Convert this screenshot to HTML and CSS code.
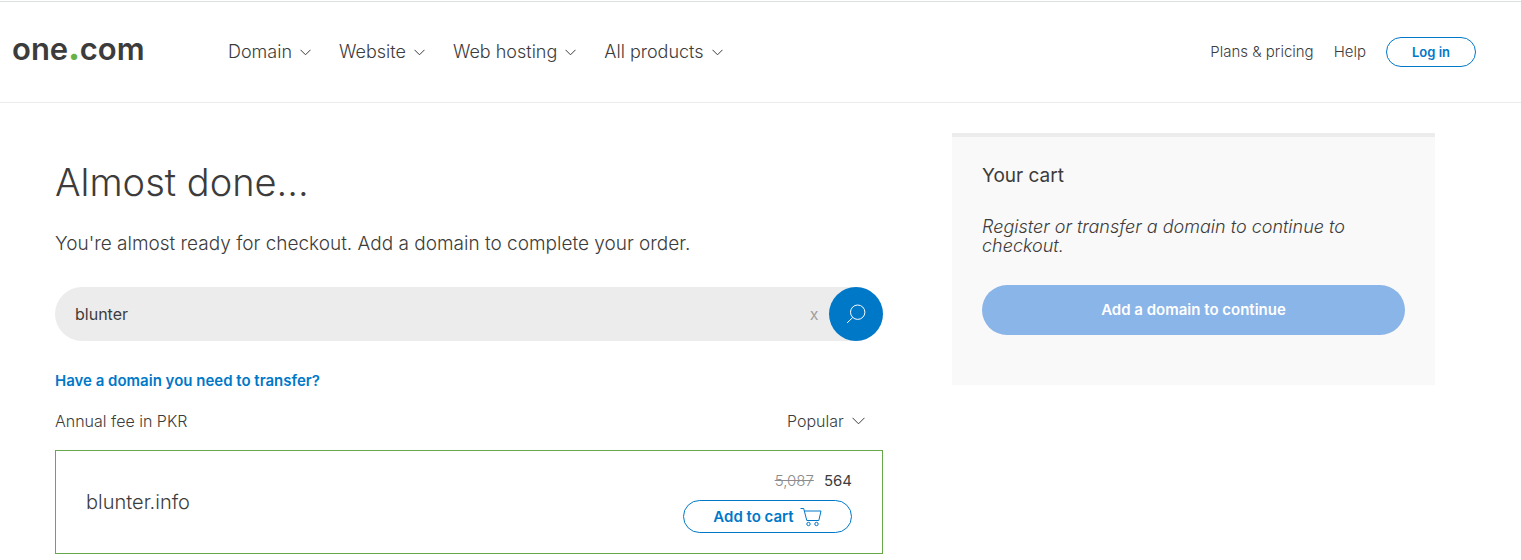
FILE: index.html
```html
<!DOCTYPE html>
<html lang="en">
<head>
<meta charset="utf-8">
<meta name="viewport" content="width=device-width, initial-scale=1">
<title>Almost done... | one.com</title>
<link rel="stylesheet" href="styles.css">
</head>
<body>
<header class="header">
  <a class="logo" href="#">one<span class="logo-dot">.</span>com</a>
  <nav class="nav" aria-label="Main">
    <button class="nav-item" type="button">Domain <svg class="chevron" viewBox="0 0 11 7" aria-hidden="true"><path d="M.5.8l5 5 5-5"/></svg></button>
    <button class="nav-item" type="button">Website <svg class="chevron" viewBox="0 0 11 7" aria-hidden="true"><path d="M.5.8l5 5 5-5"/></svg></button>
    <button class="nav-item" type="button">Web hosting <svg class="chevron" viewBox="0 0 11 7" aria-hidden="true"><path d="M.5.8l5 5 5-5"/></svg></button>
    <button class="nav-item" type="button">All products <svg class="chevron" viewBox="0 0 11 7" aria-hidden="true"><path d="M.5.8l5 5 5-5"/></svg></button>
  </nav>
  <div class="account">
    <a class="account-link" href="#">Plans &amp; pricing</a>
    <a class="account-link" href="#">Help</a>
    <a class="login" href="#">Log in</a>
  </div>
</header>
<main class="main">
  <section class="order">
    <h1 class="title">Almost done...</h1>
    <p class="intro">You're almost ready for checkout. Add a domain to complete your order.</p>
    <form class="search" role="search">
      <input class="search-input" type="text" value="blunter" aria-label="Domain name">
      <button class="search-clear" type="button" aria-label="Clear">x</button>
      <button class="search-submit" type="submit" aria-label="Search">
        <svg class="search-icon" viewBox="0 0 20 20" aria-hidden="true"><circle cx="11.7" cy="8.2" r="7.2"/><path d="M6.7 13.5L1 19"/></svg>
      </button>
    </form>
    <a class="transfer" href="#">Have a domain you need to transfer?</a>
    <div class="list-head">
      <span>Annual fee in PKR</span>
      <div class="sort">
        <select class="sort-select" aria-label="Sort domains"><option>Popular</option></select>
        <svg class="sort-chevron" viewBox="0 0 13 8" aria-hidden="true"><path d="M.5.8l6 6 6-6"/></svg>
      </div>
    </div>
    <article class="offer">
      <h2 class="offer-name">blunter.info</h2>
      <div class="offer-buy">
        <div class="prices"><s class="price-old">5,087</s><span class="price">564</span></div>
        <button class="add" type="button">Add to cart
          <svg class="cart-icon" viewBox="0 0 22 20" aria-hidden="true"><path d="M.5 1.5h3.200L6.800 13.500h12L21 4H4.400"/><circle cx="8.500" cy="17" r="1.700"/><circle cx="16.500" cy="17" r="1.700"/></svg>
        </button>
      </div>
    </article>
  </section>
  <aside class="cart">
    <h2 class="cart-title">Your cart</h2>
    <p class="cart-note">Register or transfer a domain to continue to checkout.</p>
    <button class="cart-button" type="button" disabled>Add a domain to continue</button>
  </aside>
</main>
</body>
</html>
```

FILE: styles.css
```css
* { box-sizing: border-box; }
body {
  margin: 0;
  padding-top: 1px;
  background: #fff;
  color: #3c3c3c;
  font-family: Inter, "Open Sans", sans-serif;
  font-size: 15px;
  font-weight: 300;
  line-height: 20px;
}
button, input, select { font: inherit; color: inherit; }
button { cursor: pointer; }
a { text-decoration: none; color: inherit; }
h1, h2, p { margin: 0; font-weight: 300; }
svg { fill: none; stroke: currentColor; flex: none; }

.header {
  display: flex;
  align-items: center;
  height: 102px;
  padding: 0 45px 0 12px;
  border-top: 1px solid #dcdfdf;
  border-bottom: 1px solid #ebebeb;
}
.logo {
  width: 216px;
  font-size: 31px;
  font-weight: 600;
  line-height: 40px;
  padding-bottom: 6px;
}
.logo-dot { color: #66b245; font-weight: 900; }
.nav { display: flex; gap: 28px; }
.nav-item {
  display: flex;
  align-items: center;
  gap: 8px;
  padding: 0;
  border: 0;
  background: none;
  font-size: 18px;
}
.chevron { width: 11px; height: 7px; }
.account {
  display: flex;
  align-items: center;
  gap: 20px;
  margin-left: auto;
}
.login {
  width: 90px;
  padding: 4px 0;
  border: 1px solid #0078c8;
  border-radius: 15px;
  color: #0078c8;
  font-size: 13px;
  font-weight: 600;
  text-align: center;
}

.main {
  display: grid;
  grid-template-columns: 60% 35%;
  justify-content: space-between;
  align-items: start;
  padding: 30px 86px 0 55px;
}
.order { padding-top: 25px; }
.title { font-size: 38px; line-height: 48px; }
.intro { margin-top: 26px; font-size: 19px; line-height: 24px; }
.search {
  display: flex;
  margin-top: 31px;
  height: 54px;
  border-radius: 27px;
  background: #ececec;
}
.search-input {
  flex: 1;
  min-width: 0;
  padding: 0 20px;
  border: 0;
  outline: 0;
  background: none;
  font-size: 16px;
  font-weight: 400;
}
.search-clear {
  width: 30px;
  padding: 0;
  border: 0;
  background: none;
  color: #a0a0a0;
  font-size: 16px;
  font-weight: 400;
}
.search-submit {
  display: grid;
  place-items: center;
  width: 54px;
  padding: 0;
  border: 0;
  border-radius: 50%;
  background: #0078c8;
  color: #fff;
}
.search-icon { width: 20px; height: 20px; }
.transfer {
  display: block;
  margin-top: 30px;
  color: #0078c8;
  font-weight: 600;
}
.list-head {
  display: flex;
  justify-content: space-between;
  margin-top: 20px;
  padding-right: 18px;
  font-size: 16px;
}
.sort { display: flex; align-items: center; gap: 8px; }
.sort-select {
  appearance: none;
  padding: 0;
  border: 0;
  background: none;
}
.sort-chevron { width: 13px; height: 8px; }
.offer {
  display: flex;
  align-items: center;
  justify-content: space-between;
  margin-top: 19px;
  padding: 20px 30px;
  border: 1px solid #66a84a;
}
.offer-name { font-size: 20px; line-height: 24px; }
.prices {
  display: flex;
  justify-content: flex-end;
  gap: 10px;
  margin-bottom: 9px;
}
.price-old { color: #8c8c8c; }
.price { font-weight: 400; }
.add {
  display: flex;
  align-items: center;
  justify-content: center;
  gap: 6px;
  width: 169px;
  height: 33px;
  padding: 0;
  border: 1px solid #0078c8;
  border-radius: 17px;
  background: #fff;
  color: #0078c8;
  font-size: 15px;
  font-weight: 600;
}
.cart-icon { width: 22px; height: 20px; }

.cart {
  padding: 27px 30px 50px;
  border-top: 4px solid #ececec;
  background: #f9f9f9;
}
.cart-title { font-size: 19px; font-weight: 400; line-height: 24px; }
.cart-note {
  margin: 29px 0 30px;
  font-size: 18px;
  font-style: italic;
  line-height: 19px;
}
.cart-button {
  width: 100%;
  height: 50px;
  padding: 0;
  border: 0;
  border-radius: 25px;
  background: #8ab5e8;
  color: #fff;
  font-weight: 600;
}
```
